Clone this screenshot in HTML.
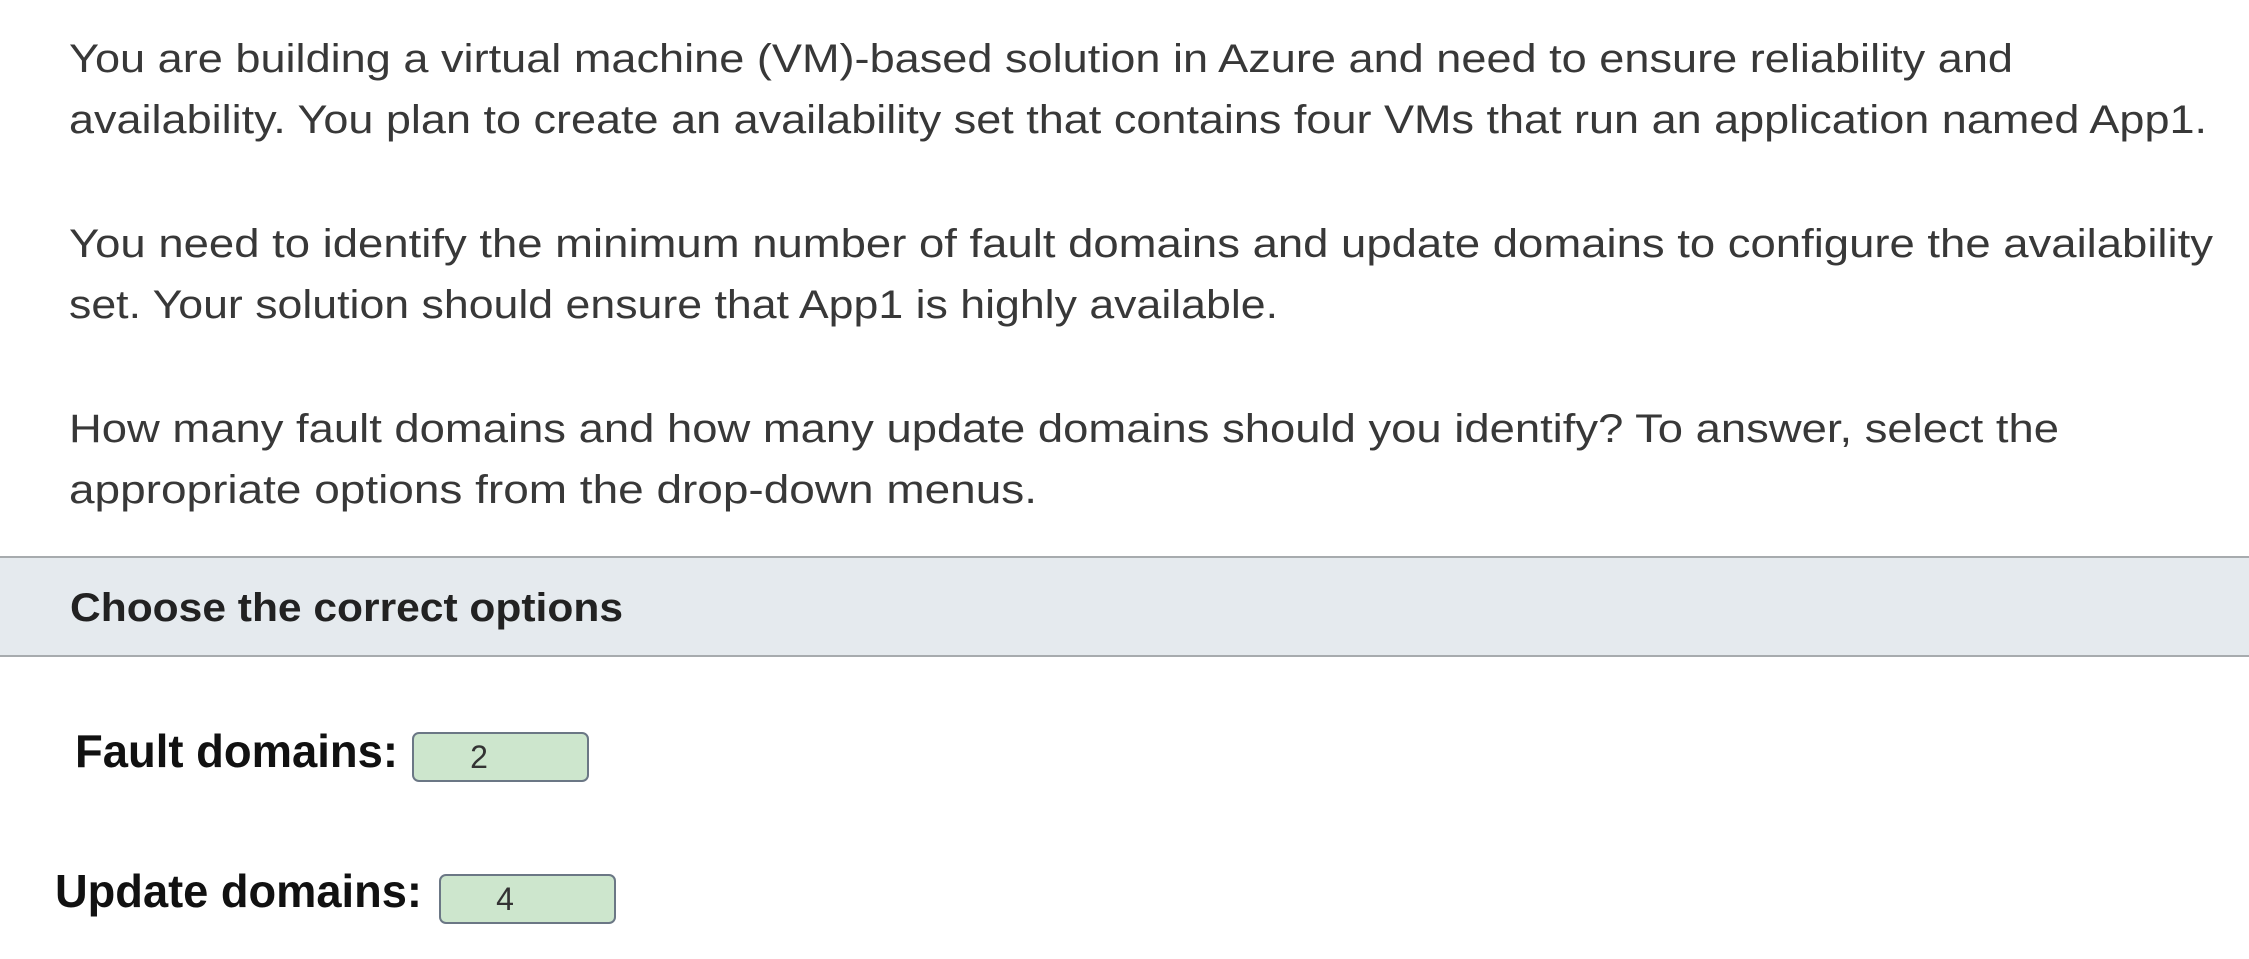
<!DOCTYPE html>
<html><head><meta charset="utf-8"><style>
html,body{margin:0;padding:0;background:#fff;width:2249px;height:959px;overflow:hidden}
svg{display:block}
.b{font-family:"Liberation Sans",sans-serif;font-size:40px;fill:#383838}
.h{font-family:"Liberation Sans",sans-serif;font-size:40px;fill:#222;font-weight:bold}
.l{font-family:"Liberation Sans",Arial,sans-serif;font-size:46px;fill:#111;font-weight:bold}
.d{font-family:"Liberation Sans",sans-serif;font-size:32px;fill:#333}
</style></head><body>
<svg width="2249" height="959" viewBox="0 0 2249 959" xmlns="http://www.w3.org/2000/svg">
<rect x="0" y="0" width="2249" height="959" fill="#fff"/>
<text class="b" x="69" y="72" textLength="1944" lengthAdjust="spacingAndGlyphs">You are building a virtual machine (VM)-based solution in Azure and need to ensure reliability and</text>
<text class="b" x="69" y="133" textLength="2138" lengthAdjust="spacingAndGlyphs">availability. You plan to create an availability set that contains four VMs that run an application named App1.</text>
<text class="b" x="69" y="257" textLength="2144" lengthAdjust="spacingAndGlyphs">You need to identify the minimum number of fault domains and update domains to configure the availability</text>
<text class="b" x="69" y="318" textLength="1209" lengthAdjust="spacingAndGlyphs">set. Your solution should ensure that App1 is highly available.</text>
<text class="b" x="69" y="442" textLength="1990" lengthAdjust="spacingAndGlyphs">How many fault domains and how many update domains should you identify? To answer, select the</text>
<text class="b" x="69" y="503" textLength="968" lengthAdjust="spacingAndGlyphs">appropriate options from the drop-down menus.</text>
<rect x="0" y="557" width="2249" height="99" fill="#e5eaee"/>
<rect x="0" y="556" width="2249" height="2" fill="#a7abae"/>
<rect x="0" y="655" width="2249" height="2" fill="#a7abae"/>
<text class="h" x="70" y="621" textLength="553" lengthAdjust="spacingAndGlyphs">Choose the correct options</text>
<text class="l" x="75" y="767" textLength="323" lengthAdjust="spacingAndGlyphs">Fault domains:</text>
<rect x="413" y="733" width="175" height="48" rx="6" fill="#cde6cd" stroke="#6b7785" stroke-width="2"/>
<text class="d" x="479" y="768" text-anchor="middle">2</text>
<text class="l" x="55" y="907" textLength="367" lengthAdjust="spacingAndGlyphs">Update domains:</text>
<rect x="440" y="875" width="175" height="48" rx="6" fill="#cde6cd" stroke="#6b7785" stroke-width="2"/>
<text class="d" x="505" y="910" text-anchor="middle">4</text>
</svg>
</body></html>
